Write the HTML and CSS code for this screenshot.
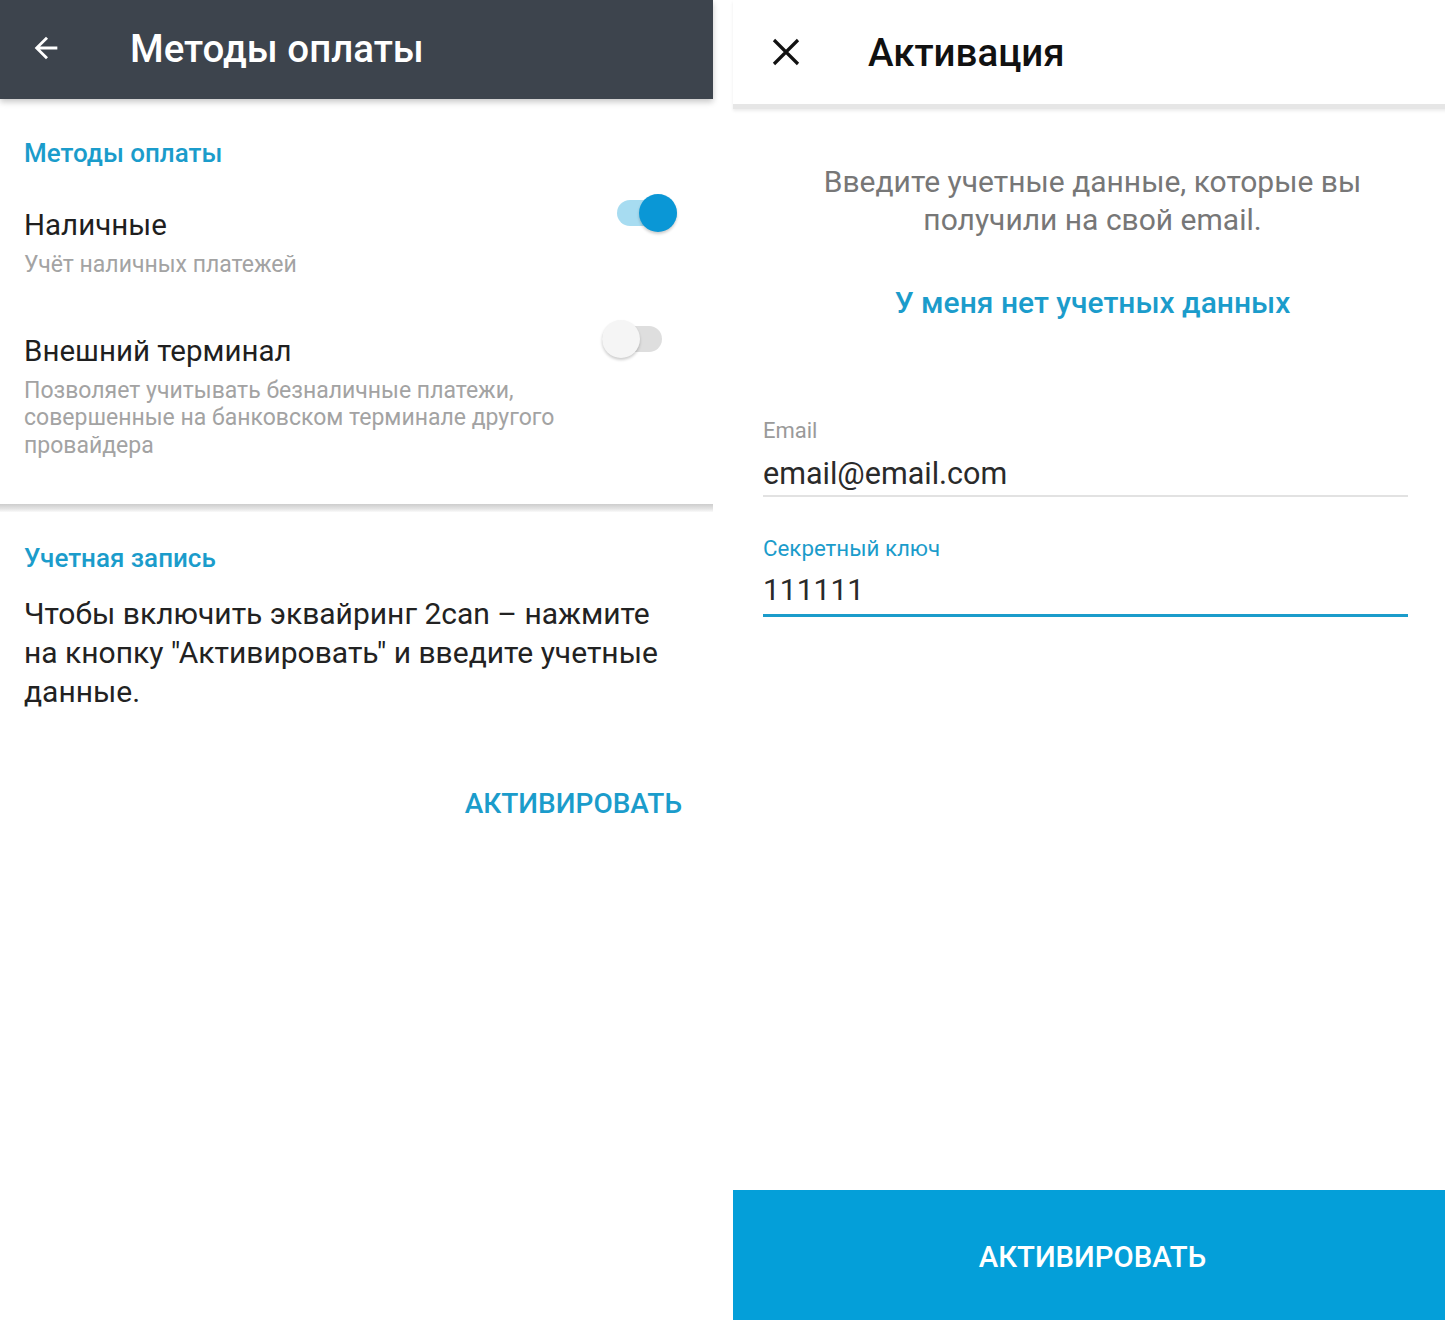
FILE: index.html
```html
<!DOCTYPE html>
<html lang="ru">
<head>
<meta charset="UTF-8" />
<meta name="viewport" content="width=device-width, initial-scale=1" />
<title>Методы оплаты</title>
<link rel="stylesheet" href="styles.css">
</head>
<body>

<!-- Экран: методы оплаты -->
<div class="screen screen-left">
  <header class="appbar appbar-dark">
    <svg class="appbar-icon" width="34" height="34" viewBox="0 0 24 24">
      <path d="M20 11H7.83l5.59-5.59L12 4l-8 8 8 8 1.41-1.41L7.83 13H20v-2z" fill="#fff"/>
    </svg>
    <h1>Методы оплаты</h1>
  </header>

  <section class="group">
    <h3 class="group-title">Методы оплаты</h3>

    <div class="pref pref-first">
      <div class="pref-text">
        <div class="pref-title">Наличные</div>
        <div class="pref-sub">Учёт наличных платежей</div>
      </div>
      <div class="toggle on"><span class="track"></span><span class="thumb"></span></div>
    </div>

    <div class="pref">
      <div class="pref-text">
        <div class="pref-title">Внешний терминал</div>
        <div class="pref-sub">Позволяет учитывать безналичные платежи,<br>совершенные на банковском терминале другого<br>провайдера</div>
      </div>
      <div class="toggle off"><span class="track"></span><span class="thumb"></span></div>
    </div>
  </section>

  <div class="divider"></div>

  <section class="group">
    <h3 class="group-title account-title">Учетная запись</h3>
    <p class="account-text">Чтобы включить эквайринг 2can – нажмите<br>на кнопку "Активировать" и введите учетные<br>данные.</p>
    <div class="actions">
      <button class="text-btn">АКТИВИРОВАТЬ</button>
    </div>
  </section>
</div>

<!-- Экран: активация -->
<div class="screen screen-right">
  <header class="appbar appbar-light">
    <svg class="appbar-icon close" width="28" height="28" viewBox="0 0 28 28">
      <path d="M2 2L26 26M26 2L2 26" stroke="#111" stroke-width="3.2"/>
    </svg>
    <h1>Активация</h1>
  </header>

  <div class="form">
    <div class="hint">
      <p class="intro">Введите учетные данные, которые вы<br>получили на свой email.</p>
      <a class="link" href="#">У меня нет учетных данных</a>
    </div>

    <label class="field">
      <span class="field-label">Email</span>
      <span class="field-value">email@email.com</span>
    </label>

    <label class="field focused">
      <span class="field-label">Секретный ключ</span>
      <span class="field-value">111111</span>
    </label>
  </div>

  <button class="primary-btn">АКТИВИРОВАТЬ</button>
</div>

</body>
</html>
```

FILE: styles.css
```css
body {
  font-family: Roboto, "Noto Sans", sans-serif;
  background: #fff;
  color: #212121;
  margin: 0; padding: 0;
  display: flex;
  gap: 20px;
  width: 1445px;
  height: 1320px;
  overflow: hidden;
}
.screen {
  display: flex;
  flex-direction: column;
  flex-shrink: 0;
  height: 1320px;
}
.screen-left {
  width: 713px;
}
.screen-right {
  width: 719px;
}

/* app bars */
.appbar {
  display: flex;
  align-items: center;
  flex-shrink: 0;
}
.appbar h1 {
  margin: 0;
  font-weight: 500;
  font-size: 38.5px;
}
.appbar-dark {
  height: 96px;
  padding-bottom: 3px;
  background: #3d444d;
  color: #fff;
  padding-left: 29px;
  box-shadow: 0 3px 6px rgba(0,0,0,0.22);
}
.appbar-dark h1 {
  margin-left: 67px;
}
.appbar-light {
  height: 104px;
  padding-left: 39px;
  border-bottom: 5px solid #e6e6e6;
  box-shadow: 0 2px 3px rgba(0,0,0,0.08);
}
.appbar-light h1 {
  margin-left: 68px;
  color: #111;
}

/* preferences */
.group {
  padding: 0 24px;
}
.group-title {
  margin: 39px 0 0;
  font-size: 26px;
  font-weight: 500;
  color: #1b9ccb;
  line-height: 30px;
}
.pref {
  display: flex;
  align-items: flex-start;
  justify-content: space-between;
  margin-top: 55px;
}
.pref-first {
  margin-top: 40px;
}
.pref-title {
  font-size: 29.5px;
  line-height: 34px;
  color: #1f1f1f;
}
.pref-sub {
  margin-top: 9px;
  font-size: 23px;
  line-height: 27.5px;
  color: #a3a3a3;
}

.toggle {
  position: relative;
  width: 60px;
  height: 38px;
  margin-top: -14px;
}
.toggle .track {
  position: absolute;
  left: 0; right: 0;
  top: 6px;
  height: 26px;
  border-radius: 13px;
}
.toggle .thumb {
  position: absolute;
  top: 0;
  width: 38px;
  height: 38px;
  border-radius: 50%;
  box-shadow: 0 2px 3px rgba(0,0,0,0.2);
}
.toggle.on {
  margin-right: 12px;
}
.toggle.on .track {
  background: #a7dcf1;
}
.toggle.on .thumb {
  right: 0;
  background: #0a97d6;
}
.toggle.off {
  margin-right: 27px;
}
.toggle.off .track {
  background: #dedede;
}
.toggle.off .thumb {
  left: 0;
  background: #f5f5f5;
}

.divider {
  margin-top: 45px;
  height: 8px;
  background: linear-gradient(#cdcdcd, #e4e4e4 60%, #fafafa);
}

.account-title {
  margin-top: 31px;
}
.account-text {
  margin: 21px 0 0;
  font-size: 30px;
  line-height: 39px;
  color: #222;
}
.actions {
  display: flex;
  justify-content: flex-end;
  margin-top: 76px;
}
.text-btn {
  background: none;
  border: none;
  padding: 0;
  margin-right: 7px;
  font-family: inherit;
  font-size: 28px;
  line-height: 34px;
  font-weight: 500;
  color: #1b9ccb;
  cursor: pointer;
}

/* activation form */
.form {
  flex: 1;
  display: flex;
  flex-direction: column;
  padding: 0 44px 0 30px;
}
.hint {
  display: flex;
  flex-direction: column;
  align-items: center;
  padding-left: 14px;
}
.intro {
  margin: 54px 0 0;
  text-align: center;
  font-size: 30px;
  line-height: 38px;
  color: #777;
}
.link {
  margin-top: 46px;
  font-size: 30px;
  line-height: 36px;
  font-weight: 500;
  color: #1b9ccb;
  text-decoration: none;
}
.field {
  display: flex;
  flex-direction: column;
  border-bottom: 2px solid #e2e2e2;
  padding-bottom: 3px;
  margin-top: 96px;
}
.field + .field {
  margin-top: 37px;
}
.field-label {
  font-size: 22px;
  line-height: 28px;
  color: #9a9a9a;
}
.field-value {
  margin-top: 11px;
  font-size: 30.5px;
  line-height: 36px;
  color: #2a2a2a;
}
.field.focused {
  border-bottom: 3px solid #1b9ccb;
  padding-bottom: 6px;
}
.field.focused .field-label {
  color: #1b9ccb;
  font-size: 22.3px;
}
.field.focused .field-value {
  margin-top: 10px;
  font-size: 30px;
}

.primary-btn {
  height: 130px;
  flex-shrink: 0;
  border: none;
  background: #049fd9;
  color: #fff;
  font-family: inherit;
  font-size: 29.3px;
  font-weight: 500;
  padding-top: 4px;
  cursor: pointer;
}
```
